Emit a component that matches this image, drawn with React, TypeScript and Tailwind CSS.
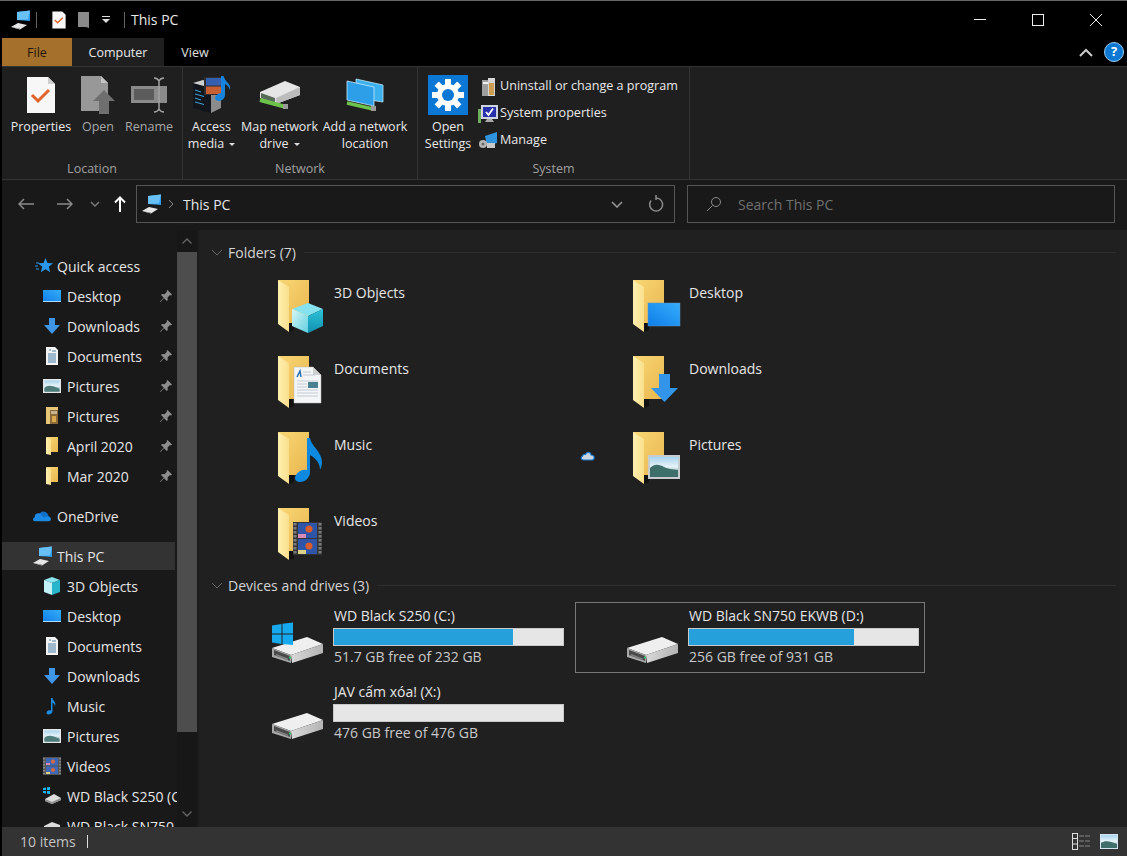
import type { ReactNode } from "react";

const font = { fontFamily: '"Open Sans", "Noto Sans", sans-serif' };

function Defs() {
  return (
    <svg className="absolute w-0 h-0">
      <defs>
        <linearGradient id="blue" x1="0" y1="1" x2="1" y2="0">
          <stop offset="0" stopColor="#0f7de8" />
          <stop offset="1" stopColor="#35adfb" />
        </linearGradient>
        <linearGradient id="back" x1="0" y1="0" x2="1" y2="1">
          <stop offset="0" stopColor="#f8d775" />
          <stop offset="1" stopColor="#e9b64f" />
        </linearGradient>
        <linearGradient id="flap" x1="0" y1="0" x2="1" y2="0">
          <stop offset="0" stopColor="#fff0b0" />
          <stop offset="1" stopColor="#fadf8c" />
        </linearGradient>
        <linearGradient id="sky" x1="0" y1="0" x2="0" y2="1">
          <stop offset="0" stopColor="#a8d4ee" />
          <stop offset="0.5" stopColor="#e8f4f8" />
          <stop offset="1" stopColor="#356f80" />
        </linearGradient>
        <linearGradient id="drive" x1="0" y1="0" x2="1" y2="0">
          <stop offset="0" stopColor="#d8d8d8" />
          <stop offset="1" stopColor="#b4b4b4" />
        </linearGradient>
        <linearGradient id="cubeR" x1="0" y1="0" x2="0" y2="1">
          <stop offset="0" stopColor="#2cc3d8" />
          <stop offset="1" stopColor="#128fb0" />
        </linearGradient>
        <linearGradient id="cubeL" x1="0" y1="0" x2="1" y2="1">
          <stop offset="0" stopColor="#d8f6f7" />
          <stop offset="1" stopColor="#5fd0e0" />
        </linearGradient>
      </defs>
    </svg>
  );
}

/* ---------- little icons for the nav pane ---------- */

function DesktopSm() {
  return (
    <svg width="20" height="16" viewBox="0 0 20 16">
      <rect x="1" y="2" width="18" height="12" fill="url(#blue)" />
      <rect x="1" y="13" width="18" height="1" fill="#a8dcff" />
    </svg>
  );
}
function DownSm() {
  return (
    <svg width="20" height="18" viewBox="0 0 20 18">
      <path d="M7 1h6v7h5l-8 9-8-9h5z" fill="#3f96e6" />
    </svg>
  );
}
function DocSm() {
  return (
    <svg width="20" height="18" viewBox="0 0 20 18">
      <path d="M4 0h9l3 3v15H4z" fill="#f4f4f4" />
      <path d="M7 3h2M10 4h4M6 7h8M6 9h8M6 11h8M6 13h8M6 15h8" stroke="#4a7ea8" strokeWidth="1" />
    </svg>
  );
}
function PicSm() {
  return (
    <svg width="20" height="16" viewBox="0 0 20 16">
      <rect x="1" y="1" width="18" height="14" fill="#e4e8ea" />
      <rect x="2.5" y="2.5" width="15" height="11" fill="url(#sky)" />
      <path d="M2.5 10c3-3 7-3 15 1v2.500h-15z" fill="#4d7b78" />
    </svg>
  );
}
function FolderSm() {
  return (
    <svg width="20" height="18" viewBox="0 0 20 18">
      <path d="M5 0h11v15H8z" fill="url(#back)" />
      <path d="M4 0l5 2v16l-5-1z" fill="url(#flap)" />
    </svg>
  );
}
function PicturesFolderSm() {
  return (
    <svg width="20" height="18" viewBox="0 0 20 18">
      <path d="M4 0h12v17H4z" fill="#e7c678" />
      <rect x="8" y="3" width="8" height="14" fill="#8a6a3a" />
      <rect x="10" y="9" width="4" height="6" fill="#d9ab4e" />
      <rect x="9" y="4" width="6" height="3" fill="#c8b58d" />
    </svg>
  );
}
function CubeSm() {
  return (
    <svg width="20" height="18" viewBox="0 0 20 18">
      <path d="M10 0l8 3-8 3-8-3z" fill="#8be4ef" />
      <path d="M2 3l8 3v12l-8-3z" fill="#c2f2f5" />
      <path d="M18 3l-8 3v12l8-3z" fill="#26b5cb" />
    </svg>
  );
}
function MusicSm() {
  return (
    <svg width="20" height="18" viewBox="0 0 20 18">
      <path d="M9 1h1.500c.5 3 4 4 2.500 8-.5-2-1.500-3-2.500-3.500V14c0 2-2 3.500-4 3.500S4 16 5 14.500 8 13 9 13.500z" fill="#1b8de0" />
    </svg>
  );
}
function FilmSm() {
  return (
    <svg width="20" height="18" viewBox="0 0 20 18">
      <rect x="1" y="0" width="18" height="18" fill="#555" />
      <path d="M2 1v16M18 1v16" stroke="#999" strokeWidth="1.500" strokeDasharray="1.500 1.500" />
      <rect x="4" y="1" width="12" height="7.500" fill="#3f68b8" />
      <rect x="4" y="9.500" width="12" height="7.500" fill="#3f68b8" />
      <circle cx="11" cy="4.500" r="2" fill="#d9683a" />
      <circle cx="11" cy="13" r="2" fill="#d9683a" />
      <rect x="4" y="6" width="4" height="2" fill="#d98ab0" />
      <rect x="4" y="15" width="4" height="2" fill="#d9d08a" />
    </svg>
  );
}
function WinDriveSm() {
  return (
    <svg width="20" height="18" viewBox="0 0 20 18">
      <path d="M1 1l3-.500V3H1zM5 .300L8 0v3H5zM1 4h3v2.500L1 6zM5 4h3v3l-3-.300z" fill="#21b4e8" />
      <path d="M3 12l9-5 7 4v2l-9 4-7-3z" fill="#dcdcdc" />
      <path d="M3 12l7 3 9-4v2l-9 4-7-3z" fill="#8d8d8d" />
    </svg>
  );
}
function DriveSm() {
  return (
    <svg width="20" height="18" viewBox="0 0 20 18">
      <path d="M2 9l8-4 8 3v3l-8 4-8-3z" fill="#dcdcdc" />
    </svg>
  );
}
function StarIcon() {
  return (
    <svg width="18" height="18" viewBox="0 0 18 18">
      <path d="M10.500 1l2 5 5.500.300-4.200 3.500 1.400 5.500-4.700-3-4.700 3 1.400-5.500L3 6.300l5.500-.300z" fill="#2a97ea" />
      <path d="M1 6h3M0 9h3M1 12h3" stroke="#2a97ea" strokeWidth="1" />
    </svg>
  );
}
function OneDriveIcon() {
  return (
    <svg width="20" height="14" viewBox="0 0 22 16">
      <path d="M6 14h13c3 0 3-5-.5-5.500C17.500 3.500 12 1 8.500 5 4.500 4 2 7 3 9.500 0 10 0 14 3 14z" fill="#1c8ae4" />
      <path d="M8.500 5c3.500-4 9-1.500 10 3.500-3-.8-4.500 0-5.500 1.500-1.500-2-3-3.500-4.500-5z" fill="#0f6fc6" />
    </svg>
  );
}
function ThisPCIcon({ size = 20 }: { size?: number }) {
  return (
    <svg width={size} height={size} viewBox="0 0 20 20">
      <path d="M6 2l13-1.500 0 1v9.500L6 10z" fill="#2f9de8" />
      <path d="M6 2l13-1.500L17 9.500 6 10z" fill="#68c0f5" />
      <path d="M0 17l7-4 9 2-7 4.500z" fill="#e6e6e6" />
      <path d="M0 17l9 2.500 0-1z" fill="#8b8b8b" />
    </svg>
  );
}
function PinIcon() {
  return (
    <svg width="14" height="14" viewBox="0 0 14 14">
      <path d="M8.500 1l4.500 4.500-1 1-1-.500-2.500 2.500.300 2.500-1 1-2.800-2.800L1.500 13 1 12.500l3.800-3.800L2 5.900l1-1 2.500.300L8 2.700 7.500 2z" fill="#8e8e8e" />
    </svg>
  );
}

/* ---------- big folders ---------- */

function BigFolder({ children }: { children?: ReactNode }) {
  return (
    <svg width="52" height="56" viewBox="0 0 52 56" className="shrink-0">
      <path d="M2 2h31v43H13z" fill="url(#back)" />
      <path d="M13 45h5v7l-5 2z" fill="#111" />
      <path d="M2 2l11 7v45L2 46z" fill="url(#flap)" />
      {children}
    </svg>
  );
}

const overlays: Record<string, ReactNode> = {
  cube: (
    <g>
      <path d="M32 25l15 6-15 7-16-7z" fill="#86e2ee" />
      <path d="M16 31l16 7v17l-16-7z" fill="url(#cubeL)" />
      <path d="M47 31l-15 7v17l15-7z" fill="url(#cubeR)" />
    </g>
  ),
  doc: (
    <g>
      <path d="M18 13h19l8 8v28H18z" fill="#f4f5f6" stroke="#b9b9b9" strokeWidth="0.500" />
      <path d="M37 13v8h8z" fill="#cfcfcf" />
      <path d="M21 23l3-6 1 6" stroke="#2a6fb0" strokeWidth="1.500" fill="none" />
      <path d="M27 18h8M27 21h12M21 27h21M21 30h10M21 33h10M21 36h21M21 39h21M21 42h21" stroke="#c4ccd6" strokeWidth="1" />
      <rect x="32" y="28" width="10" height="6" fill="#4a8090" />
    </g>
  ),
  music: (
    <path d="M31 8h3c1 8 12 14 12 24 0 3-1 6-2 8 0-6-3-11-10-15v17c0 6-5 10-10 10-5 0-6-4-4-7 2-4 7-6 11-5z" fill="#0d8ae0" />
  ),
  film: (
    <g>
      <rect x="17" y="16" width="29" height="33" fill="#333" />
      <path d="M19 17v31M44 17v31" stroke="#7c7c7c" strokeWidth="3" strokeDasharray="2.500 1.500" />
      <rect x="22" y="17" width="19" height="15" fill="#2f55a8" />
      <rect x="22" y="33" width="19" height="15" fill="#2f55a8" />
      <circle cx="33" cy="23" r="3.500" fill="#d85c2c" />
      <circle cx="33" cy="40" r="3.500" fill="#d85c2c" />
      <rect x="22" y="28" width="8" height="4" fill="#d68ab5" />
      <rect x="22" y="44" width="8" height="4" fill="#d9d08a" />
    </g>
  ),
  desktop: (
    <rect x="17" y="25" width="32" height="23" fill="url(#blue)" stroke="#5a93c0" strokeWidth="0.500" />
  ),
  down: <path d="M28 20h11v14h8L33.500 48 20 34h8z" fill="#3395ea" />,
  picture: (
    <g>
      <rect x="17" y="25" width="32" height="24" fill="#c6ccd0" />
      <rect x="19" y="27" width="28" height="20" fill="url(#sky)" />
      <path d="M19 38c5-5 10-3 14-1s8 2 14 3v7H19z" fill="#3f6f6a" />
    </g>
  ),
};

function BigDrive({ win = false }: { win?: boolean }) {
  return (
    <svg width="56" height="46" viewBox="0 0 56 46" className="shrink-0">
      <path d="M1 26L36 15l16 7L20 33z" fill="#efefef" />
      <path d="M20 33l32-11v9L21 41z" fill="url(#drive)" />
      <path d="M1 26l19 7v8L1 35z" fill="#a8a8a8" />
      <path d="M3 28l16 6v5L3 33z" fill="#4a4a4a" />
      <path d="M5 32l12 4.500v1.500L5 33.500z" fill="#828282" />
      <rect x="18" y="34.500" width="2" height="2" fill="#37c46e" />
      {win && (
        <path d="M1 3.500l9.500-1.500v9.500H1zM11.500 1.800L22 .5v11H11.500zM1 12.500h9.500V22L1 20.500zM11.500 12.500H22V23l-10.500-1z" fill="#16a9ee" />
      )}
    </svg>
  );
}

/* ---------- ribbon ---------- */

function Caret() {
  return <span className="inline-block ml-[5px] align-middle border-x-[3px] border-t-[3px] border-x-transparent border-t-[#ddd]" />;
}

function RibbonBtn({ w, icon, lines, dim, caret }: { w: string; icon: ReactNode; lines: string[]; dim?: boolean; caret?: boolean }) {
  return (
    <div className={`flex flex-col items-center shrink-0 ${w}`}>
      <div className="h-[47px] flex items-center justify-center">{icon}</div>
      <div className={`text-center leading-[17px] text-[12.500px] whitespace-nowrap ${dim ? "text-[#a8a8a8]" : "text-[#e8e8e8]"}`}>
        {lines.map((l, i) => (
          <div key={l}>
            {l}
            {caret && i === lines.length - 1 && <Caret />}
          </div>
        ))}
      </div>
    </div>
  );
}

function Group({ w, label, children }: { w: string; label: string; children: ReactNode }) {
  return (
    <div className={`flex flex-col shrink-0 border-r border-[#333] ${w}`}>
      <div className="flex flex-1 pt-[4px]">{children}</div>
      <div className="h-[18px] mb-px text-center text-[12.500px] leading-[18px] text-[#a0a0a0]">{label}</div>
    </div>
  );
}

function PropertiesIcon() {
  return (
    <svg width="30" height="38" viewBox="0 0 30 38">
      <path d="M1 1h21l7 7v29H1z" fill="#f7f7f7" />
      <path d="M22 1l7 7h-7z" fill="#cfcfcf" />
      <path d="M6 19l6 6 11-11" stroke="#e2622b" strokeWidth="3" fill="none" />
    </svg>
  );
}
function OpenIcon() {
  return (
    <svg width="36" height="40" viewBox="0 0 36 40">
      <path d="M1 1h20l7 7v28H1z" fill="#989898" />
      <path d="M21 1l7 7h-7z" fill="#c2c2c2" />
      <path d="M24 15l11 11h-6v13H19V26h-6z" fill="#6f6f6f" />
    </svg>
  );
}
function RenameIcon() {
  return (
    <svg width="38" height="36" viewBox="0 0 38 36">
      <rect x="1" y="9" width="36" height="17" fill="#8a8a8a" />
      <rect x="4" y="12" width="20" height="11" fill="#5c5c5c" />
      <path d="M24 1c3 0 4 1 5 3 1-2 2-3 5-3M29 4v28M24 35c3 0 4-1 5-3 1 2 2 3 5 3" stroke="#a2a2a2" strokeWidth="1.500" fill="none" />
    </svg>
  );
}
function MediaIcon() {
  return (
    <svg width="42" height="40" viewBox="0 0 42 40">
      <path d="M2 8l18 5v25L2 33z" fill="#12161c" />
      <path d="M20 13l10-3v23l-10 5z" fill="#8c8c8c" />
      <path d="M2 8l10-3 18 5-10 3z" fill="#cfcfcf" />
      <path d="M4 15l6 2M4 19l9 2.500M4 23l6 2M4 27l9 2.500" stroke="#3ca6d8" strokeWidth="1" />
      <rect x="13" y="2" width="21" height="18" fill="#2e2e2e" />
      <rect x="15" y="3" width="17" height="7.500" fill="#3560b0" />
      <rect x="15" y="11.500" width="17" height="7.500" fill="#c85f33" />
      <path d="M30 1h2.500c1 6 8 7 6.500 14-1-3-3-5-5-6v11c0 3-3 6-6 6-5 0-5-5-1-7 1-1 2-1 3-.500z" fill="#1684dc" />
    </svg>
  );
}
function NetDriveIcon() {
  return (
    <svg width="42" height="30" viewBox="0 0 42 30">
      <path d="M1 12L26 1l15 6v8L17 24 1 18z" fill="#e6e6e6" />
      <path d="M17 18l24-11v8L17 24z" fill="#bcbcbc" />
      <path d="M2 13l14 5v5L2 18z" fill="#5a6a5a" />
      <path d="M1 20l26 7" stroke="#6cc24a" strokeWidth="4" />
      <rect x="24" y="24" width="5" height="5" fill="#9a9a9a" />
    </svg>
  );
}
function NetLocIcon() {
  return (
    <svg width="38" height="34" viewBox="0 0 38 34">
      <path d="M10 1l27 6v17L10 20z" fill="#3cb1ee" stroke="#bde4f7" strokeWidth="0.800" />
      <path d="M1 3l27 6v19L1 22z" fill="#2c9fe8" stroke="#c6ebfb" strokeWidth="0.800" />
      <path d="M1 25l26 6" stroke="#6cc24a" strokeWidth="3.500" />
      <rect x="25" y="28" width="5" height="5" fill="#9a9a9a" />
    </svg>
  );
}
function GearTile() {
  return (
    <svg width="40" height="40" viewBox="0 0 40 40">
      <rect width="40" height="40" fill="#0a78d4" />
      <g fill="#fff">
        <circle cx="20" cy="20" r="11" />
        {[0, 45, 90, 135, 180, 225, 270, 315].map((a) => (
          <rect key={a} x="17" y="4" width="6" height="8" transform={`rotate(${a} 20 20)`} />
        ))}
      </g>
      <circle cx="20" cy="20" r="6" fill="#0a78d4" />
    </svg>
  );
}
function UninstallIcon() {
  return (
    <svg width="18" height="20" viewBox="0 0 18 20">
      <rect x="3" y="3" width="7" height="16" fill="#9e9e9e" />
      <rect x="9" y="1" width="7" height="18" fill="#d6d6d6" />
      <rect x="10" y="6" width="5" height="12" fill="#cf9d50" />
      <rect x="4" y="5" width="5" height="2" fill="#f0f0f0" />
    </svg>
  );
}
function SysPropIcon() {
  return (
    <svg width="20" height="20" viewBox="0 0 20 20">
      <rect x="0" y="5" width="3" height="14" fill="#6fb05f" />
      <rect x="3" y="1" width="17" height="14" fill="#cfd3e0" />
      <rect x="5" y="3" width="13" height="10" fill="#2630a8" />
      <path d="M8 8l2.500 3L15 4.500" stroke="#fff" strokeWidth="1.800" fill="none" />
      <path d="M9 15h5l2 3H7z" fill="#a9a9a9" />
    </svg>
  );
}
function ManageIcon() {
  return (
    <svg width="20" height="18" viewBox="0 0 20 18">
      <path d="M7 4l12-4v11L9 14z" fill="#2f93dd" />
      <circle cx="5" cy="12" r="4" fill="#b5b5b5" />
      <circle cx="5" cy="12" r="1.500" fill="#666" />
      <rect x="9" y="11" width="8" height="5" fill="#c9c9c9" />
    </svg>
  );
}

function Ribbon() {
  return (
    <div className="h-[114px] flex bg-[#1f1f1f] border-y border-[#333] shrink-0">
      <Group w="w-[181px]" label="Location">
        <div className="w-[7px]" />
        <RibbonBtn w="w-[64px]" icon={<PropertiesIcon />} lines={["Properties"]} />
        <RibbonBtn w="w-[50px]" dim icon={<OpenIcon />} lines={["Open"]} />
        <RibbonBtn w="w-[52px]" dim icon={<RenameIcon />} lines={["Rename"]} />
      </Group>
      <Group w="w-[235px]" label="Network">
        <RibbonBtn w="w-[57px]" caret icon={<MediaIcon />} lines={["Access", "media"]} />
        <RibbonBtn w="w-[79px]" caret icon={<NetDriveIcon />} lines={["Map network", "drive"]} />
        <RibbonBtn w="w-[92px]" icon={<NetLocIcon />} lines={["Add a network", "location"]} />
      </Group>
      <Group w="w-[272px]" label="System">
        <div className="w-[10px]" />
        <RibbonBtn w="w-[40px]" icon={<GearTile />} lines={["Open", "Settings"]} />
        <div className="flex flex-col ml-[10px] mt-[2px] text-[12.600px] text-[#e8e8e8]">
          {[
            { icon: <UninstallIcon />, label: "Uninstall or change a program" },
            { icon: <SysPropIcon />, label: "System properties" },
            { icon: <ManageIcon />, label: "Manage" },
          ].map((r) => (
            <div key={r.label} className="h-[27px] flex items-center gap-[2px] whitespace-nowrap">
              <span className="w-[20px] flex justify-center">{r.icon}</span>
              {r.label}
            </div>
          ))}
        </div>
      </Group>
    </div>
  );
}

/* ---------- nav pane ---------- */

type NavRow = { id: string; icon: ReactNode; label: string; pin?: boolean };

const quick: NavRow[] = [
  { id: "q1", icon: <DesktopSm />, label: "Desktop", pin: true },
  { id: "q2", icon: <DownSm />, label: "Downloads", pin: true },
  { id: "q3", icon: <DocSm />, label: "Documents", pin: true },
  { id: "q4", icon: <PicSm />, label: "Pictures", pin: true },
  { id: "q5", icon: <PicturesFolderSm />, label: "Pictures", pin: true },
  { id: "q6", icon: <FolderSm />, label: "April 2020", pin: true },
  { id: "q7", icon: <FolderSm />, label: "Mar 2020", pin: true },
];

const pc: NavRow[] = [
  { id: "p1", icon: <CubeSm />, label: "3D Objects" },
  { id: "p2", icon: <DesktopSm />, label: "Desktop" },
  { id: "p3", icon: <DocSm />, label: "Documents" },
  { id: "p4", icon: <DownSm />, label: "Downloads" },
  { id: "p5", icon: <MusicSm />, label: "Music" },
  { id: "p6", icon: <PicSm />, label: "Pictures" },
  { id: "p7", icon: <FilmSm />, label: "Videos" },
  { id: "p8", icon: <WinDriveSm />, label: "WD Black S250 (C:)" },
  { id: "p9", icon: <DriveSm />, label: "WD Black SN750 EKWB (D:)" },
];

function NavChild({ row }: { row: NavRow }) {
  return (
    <div className="h-[30px] flex items-center pl-[40px] shrink-0 relative whitespace-nowrap">
      <span className="w-[25px] shrink-0 flex">{row.icon}</span>
      <span>{row.label}</span>
      {row.pin && (
        <span className="absolute left-[157px] top-[8px]">
          <PinIcon />
        </span>
      )}
    </div>
  );
}

function NavHead({ icon, label, active, offset }: { icon: ReactNode; label: string; active?: boolean; offset?: string }) {
  return (
    <div className={`h-[30px] flex items-center pl-[33px] shrink-0 ${active ? "bg-[#333] mr-[2px] border-y border-[#191919]" : ""}`}>
      <span className={`w-[22px] shrink-0 flex ${offset ?? ""}`}>{icon}</span>
      <span>{label}</span>
    </div>
  );
}

function NavPane() {
  return (
    <div className="w-[197px] flex shrink-0 bg-[#191919]">
      <div className="w-[175px] pt-[21px] flex flex-col overflow-hidden text-[14px] text-[#e6e6e6]">
        <NavHead icon={<StarIcon />} label="Quick access" />
        {quick.map((r) => (
          <NavChild key={r.id} row={r} />
        ))}
        <div className="h-[10px] shrink-0" />
        <NavHead icon={<OneDriveIcon />} label="OneDrive" offset="-translate-x-[3px]" />
        <div className="h-[10px] shrink-0" />
        <NavHead active icon={<ThisPCIcon />} label="This PC" offset="-translate-x-[2px]" />
        {pc.map((r) => (
          <NavChild key={r.id} row={r} />
        ))}
      </div>
      <div className="w-[22px] flex flex-col bg-[#171717] border-r-2 border-[#1b1b1b]">
        <div className="h-[22px] flex items-center justify-center">
          <svg width="10" height="6" viewBox="0 0 10 6">
            <path d="M.5 5.500L5 1l4.500 4.500" stroke="#666" strokeWidth="1.300" fill="none" />
          </svg>
        </div>
        <div className="h-[480px] bg-[#4d4d4d]" />
        <div className="flex-1" />
        <div className="h-[22px] mb-[2px] flex items-center justify-center">
          <svg width="10" height="6" viewBox="0 0 10 6">
            <path d="M.5.5L5 5l4.500-4.500" stroke="#666" strokeWidth="1.300" fill="none" />
          </svg>
        </div>
      </div>
    </div>
  );
}

/* ---------- main list ---------- */

function SectionHead({ label }: { label: string }) {
  return (
    <div className="h-[24px] flex items-center pl-[12px] pr-[11px]">
      <svg width="12" height="7" viewBox="0 0 12 7" className="mr-[5px] shrink-0">
        <path d="M1 1l5 5 5-5" stroke="#666" strokeWidth="1" fill="none" />
      </svg>
      <span className="text-[14px] text-[#d4d4d4] whitespace-nowrap">{label}</span>
      <div className="flex-1 h-px bg-[#2e2e2e] ml-[8px]" />
    </div>
  );
}

const folders = [
  { label: "3D Objects", k: "cube" },
  { label: "Desktop", k: "desktop" },
  { label: "Documents", k: "doc" },
  { label: "Downloads", k: "down" },
  { label: "Music", k: "music" },
  { label: "Pictures", k: "picture", cloud: true },
  { label: "Videos", k: "film" },
];

const drives = [
  { name: "WD Black S250 (C:)", free: "51.7 GB free of 232 GB", pct: 78, win: true },
  { name: "WD Black SN750 EKWB (D:)", free: "256 GB free of 931 GB", pct: 72, selected: true },
  { name: "JAV cấm xóa! (X:)", free: "476 GB free of 476 GB", pct: 0 },
];

function Cloud() {
  return (
    <svg width="15" height="11" viewBox="0 0 15 11">
      <path d="M3.500 10C1 10 .5 7 2.500 6.300 3 4.500 4.500 4 5.500 4.500 6.500 1.500 10.500 1.500 11 5c2.500 0 3.500 1.500 3 3.500-.3 1-1 1.500-2 1.500z" fill="#c9d6e2" stroke="#1b78c8" strokeWidth="1.200" />
    </svg>
  );
}

function MainList() {
  return (
    <div className="flex-1 bg-[#202020] pt-[10px] text-[14px]">
      <SectionHead label="Folders (7)" />
      <div className="grid grid-cols-[350px_350px] gap-x-[5px] gap-y-[14px] ml-[21px] mt-[14px]">
        {folders.map((f) => (
          <div key={f.label} className="h-[62px] relative flex pl-[56px] gap-[6px]">
            {f.cloud && (
              <span className="absolute left-[5px] top-[20px]">
                <Cloud />
              </span>
            )}
            <BigFolder>{overlays[f.k]}</BigFolder>
            <span className="text-[#e6e6e6] leading-[20px] mt-[5px]">{f.label}</span>
          </div>
        ))}
      </div>
      <div className="mt-[5px]">
        <SectionHead label="Devices and drives (3)" />
      </div>
      <div className="grid grid-cols-[350px_350px] gap-[5px] ml-[21px] mt-[5px]">
        {drives.map((d) => (
          <div
            key={d.name}
            className={`h-[71px] flex pl-[50px] pr-[5px] pt-[3px] border ${d.selected ? "border-[#777]" : "border-transparent"}`}
          >
            <div className="w-[62px] shrink-0 flex items-end pb-[4px]">
              <BigDrive win={d.win} />
            </div>
            <div className="flex-1 flex flex-col">
              <div className="h-[20px] leading-[20px] pl-[1px] text-[#e6e6e6] whitespace-nowrap">{d.name}</div>
              <div className="h-[18px] mt-[2px] bg-[#e6e6e6] border border-[#c9c9c9]">
                <div className="h-full bg-[#26a0da]" style={{ width: `${d.pct}%` }} />
              </div>
              <div className="h-[20px] leading-[20px] pl-[1px] mt-px text-[#c8c8c8] whitespace-nowrap">{d.free}</div>
            </div>
          </div>
        ))}
      </div>
    </div>
  );
}

/* ---------- page ---------- */

export default function App() {
  return (
    <div className="w-[1127px] h-[856px] flex flex-col bg-black overflow-hidden border-t border-[#666] pl-[2px]" style={font}>
      <Defs />
      {/* title bar */}
      <div className="h-[37px] flex items-center shrink-0 text-[#e8e8e8]">
        <div className="flex items-center pl-[9px] gap-[4px]">
          <ThisPCIcon />
          <div className="w-px h-[16px] bg-[#666] ml-[1px]" />
        </div>
        <svg width="16" height="18" viewBox="0 0 30 38" className="ml-[14px]">
          <path d="M1 1h21l7 7v29H1z" fill="#f7f7f7" />
          <path d="M6 19l6 6 11-11" stroke="#e2622b" strokeWidth="3" fill="none" />
        </svg>
        <svg width="14" height="18" viewBox="0 0 14 18" className="ml-[10px]">
          <path d="M1 1h11v16l-3-1H1z" fill="#8a8a8a" />
        </svg>
        <svg width="8" height="7" viewBox="0 0 8 7" className="ml-[11px]">
          <path d="M0 0h8v1H0zM0 3h8L4 7z" fill="#ddd" />
        </svg>
        <div className="w-px h-[16px] bg-[#666] ml-[14px]" />
        <span className="ml-[6px] text-[14px]">This PC</span>
        <div className="ml-auto flex h-full">
          <div className="w-[58px] flex items-center justify-center">
            <div className="w-[12px] h-px bg-[#eee]" />
          </div>
          <div className="w-[58px] flex items-center justify-center">
            <div className="w-[12px] h-[12px] border border-[#eee]" />
          </div>
          <div className="w-[58px] flex items-center justify-center mr-[2px]">
            <svg width="14" height="14" viewBox="0 0 14 14">
              <path d="M1 1l12 12M13 1L1 13" stroke="#eee" strokeWidth="1" />
            </svg>
          </div>
        </div>
      </div>
      {/* tabs */}
      <div className="h-[28px] flex items-stretch shrink-0 text-[12.500px]">
        <div className="w-[70px] bg-[#a5702b] text-[#24150a] flex items-center justify-center pt-[2px]">File</div>
        <div className="w-[92px] bg-[#1f1f1f] text-[#e8e8e8] flex items-center justify-center pt-[2px]">Computer</div>
        <div className="w-[62px] text-[#e0e0e0] flex items-center justify-center pt-[2px]">View</div>
        <div className="ml-auto flex items-center mr-[3px]">
          <svg width="14" height="9" viewBox="0 0 14 9" className="mr-[11px]">
            <path d="M1 8l6-6 6 6" stroke="#ccc" strokeWidth="2" fill="none" />
          </svg>
          <div className="w-[20px] h-[20px] rounded-full bg-[#0f78d2] border border-[#9ad0f5] text-white text-[13px] font-bold flex items-center justify-center">?</div>
        </div>
      </div>
      <Ribbon />
      {/* address row */}
      <div className="h-[50px] flex items-center bg-[#191919] shrink-0 pb-[2px]">
        <div className="w-[134px] flex items-center relative h-full shrink-0">
          <svg width="16" height="12" viewBox="0 0 16 12" className="ml-[16px]">
            <path d="M16 6H1M6 1L1 6l5 5" stroke="#8a8a8a" strokeWidth="1.500" fill="none" />
          </svg>
          <svg width="16" height="12" viewBox="0 0 16 12" className="ml-[23px]">
            <path d="M0 6h15M10 1l5 5-5 5" stroke="#8a8a8a" strokeWidth="1.500" fill="none" />
          </svg>
          <svg width="10" height="6" viewBox="0 0 10 6" className="ml-[17px]">
            <path d="M1 1l4 4 4-4" stroke="#777" strokeWidth="1.500" fill="none" />
          </svg>
          <svg width="12" height="16" viewBox="0 0 12 16" className="ml-[14px]">
            <path d="M6 16V1.500M1 6.500l5-5 5 5" stroke="#fff" strokeWidth="2" fill="none" />
          </svg>
        </div>
        <div className="w-[539px] h-[38px] border border-[#555] flex items-center shrink-0 text-[14px] text-[#e6e6e6]">
          <span className="ml-[5px] flex">
            <ThisPCIcon />
          </span>
          <svg width="6" height="10" viewBox="0 0 6 10" className="ml-[6px]">
            <path d="M1 1l4 4-4 4" stroke="#888" strokeWidth="1" fill="none" />
          </svg>
          <span className="ml-[9px]">This PC</span>
          <svg width="12" height="7" viewBox="0 0 12 7" className="ml-auto mr-[22px]">
            <path d="M1 1l5 5 5-5" stroke="#999" strokeWidth="1.500" fill="none" />
          </svg>
          <svg width="16" height="18" viewBox="0 0 16 18" className="ml-[3px] mr-[10px]">
            <path d="M8 3a6.500 6.500 0 1 1-5 2.500M8 0v5" stroke="#8a8a8a" strokeWidth="1.500" fill="none" />
          </svg>
        </div>
        <div className="w-[428px] h-[38px] ml-[12px] border border-[#555] flex items-center shrink-0 text-[14px] text-[#707070]">
          <svg width="16" height="16" viewBox="0 0 16 16" className="ml-[18px]">
            <circle cx="10" cy="6" r="4.500" stroke="#8a8a8a" fill="none" />
            <path d="M6.500 9.500L1 15" stroke="#8a8a8a" />
          </svg>
          <span className="ml-[16px]">Search This PC</span>
        </div>
      </div>
      {/* body */}
      <div className="flex flex-1 min-h-0 bg-[#191919]">
        <NavPane />
        <MainList />
      </div>
      {/* status bar */}
      <div className="h-[29px] bg-[#333] flex items-center shrink-0 text-[14px] text-[#c4c4c4]">
        <span className="ml-[18px]">10 items</span>
        <div className="w-px h-[13px] bg-[#ddd] ml-[11px]" />
        <div className="ml-auto flex items-center mr-[9px] gap-[9px]">
          <svg width="19" height="17" viewBox="0 0 19 17">
            <rect x="0.500" y="0.500" width="5" height="16" fill="none" stroke="#ddd" />
            <path d="M0 5.500h6M0 11h6" stroke="#ddd" />
            <path d="M7 3h12M7 8h12M7 13h12" stroke="#888" strokeDasharray="5 1" />
          </svg>
          <svg width="18" height="15" viewBox="0 0 18 15">
            <rect width="18" height="15" fill="#d5e6f2" />
            <rect x="1" y="1" width="16" height="13" fill="url(#sky)" />
            <path d="M1 9c4-3 9-2 16 1v4H1z" fill="#3f6f6a" />
          </svg>
        </div>
      </div>
    </div>
  );
}
